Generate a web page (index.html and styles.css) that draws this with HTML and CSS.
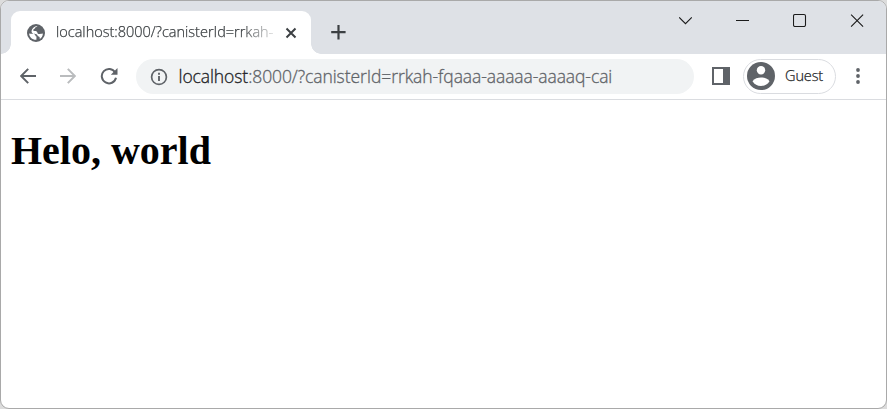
FILE: index.html
```html
<!DOCTYPE html>
<html lang="en">
<head>
<meta charset="utf-8">
<title>localhost:8000</title>
<link rel="stylesheet" href="styles.css">
</head>
<body>
<div class="window">
  <header class="tabstrip">
    <div class="tab">
      <svg class="globe" width="18" height="18" viewBox="0 0 18 18"><circle cx="9" cy="9" r="9" fill="#5f6368"/><path d="M2.1 9.5C4 10 6 9.4 7.600 10.200C8.800 11 8 12.200 9.500 12.400L9.400 15.800C5.300 16 2.300 13.200 2.100 9.500ZM10.600 2.300C9.700 3.200 8.100 3.100 7.700 4.400C7.400 5.300 6 4.900 6.100 6.300C6.300 7.600 8.700 6.700 9.700 7.500C10.700 8.200 10 9.500 11.400 9.900C12.800 10.300 13.900 9.500 15.900 9.400C15.800 11.800 14.700 13.800 12.700 15C13.100 13.500 12.300 12.500 10.900 12.300C10.500 11 10 10.200 8.400 10C7 9.800 5.800 9.800 5 8.800C3.900 7.500 5 5.200 6.200 4C7.400 2.700 8.800 2.100 10.600 2.300Z" fill="#fff"/></svg>
      <span class="tab-title">localhost:8000/?canisterId=rrkah-</span>
      <svg class="tab-close" width="12" height="12" viewBox="0 0 12 12"><path d="M1.500 1.500l9 9m0-9l-9 9" stroke="#3c4043" stroke-width="2"/></svg>
    </div>
    <svg class="new-tab" width="16" height="16" viewBox="0 0 16 16"><path d="M8.500 1v14.400M1.200 8.200h14.400" stroke="#3c4043" stroke-width="2.200"/></svg>
    <div class="controls">
      <svg width="14" height="14" viewBox="0 0 14 14"><path d="M.2 4.300l6.300 6.400 6.300-6.400"/></svg>
      <svg width="14" height="14" viewBox="0 0 14 14"><path d="M0 7.500h13" stroke-width="1"/></svg>
      <svg width="14" height="14" viewBox="0 0 14 14"><rect x=".5" y="1.500" width="12" height="12" rx="1.500"/></svg>
      <svg width="14" height="14" viewBox="0 0 14 14"><path d="M1.100 1.600l12 12m0-12l-12 12"/></svg>
    </div>
  </header>
  <nav class="toolbar">
    <div class="nav-buttons">
      <svg width="16" height="16" viewBox="0 0 16 16"><path d="M16 8H1.500M8.200 .9L1.100 8l7.100 7.100" stroke="#5f6368"/></svg>
      <svg width="16" height="16" viewBox="0 0 16 16"><path d="M0 8h14.500M7.800 .9L14.900 8l-7.100 7.100" stroke="#babcbe"/></svg>
      <svg width="18" height="18" viewBox="0 0 18 18"><path d="M15.200 5.500A7.200 7.200 0 1 0 16 10.800" stroke="#5f6368" stroke-width="2"/><path d="M17.500 1v6.700h-6.700z" fill="#5f6368"/></svg>
    </div>
    <div class="address">
      <svg width="18" height="18" viewBox="0 0 18 18"><circle cx="9" cy="9" r="7.400" fill="none" stroke="#5f6368" stroke-width="1.700"/><path d="M9 8v5M9 4.800v1.900" stroke="#5f6368" stroke-width="1.900"/></svg>
      <span class="url"><span class="host">localhost</span>:8000/?canisterId=rrkah-fqaaa-aaaaa-aaaaq-cai</span>
    </div>
    <svg class="panel" width="18" height="18" viewBox="0 0 18 18"><path d="M0 0h18v18H0zM2 2v14h9V2z" fill="#5f6368" fill-rule="evenodd"/></svg>
    <div class="profile">
      <svg width="28" height="28" viewBox="0 0 28 28"><circle cx="14" cy="14" r="14" fill="#5f6368"/><circle cx="14" cy="8.200" r="4.200" fill="#fff"/><path d="M5.500 19.200C7.200 16.500 11 15.500 14 15.500s6.800 1 8.500 3.700C20.700 22.300 17.600 24 14 24s-6.700-1.700-8.500-4.800z" fill="#fff"/></svg>
      <span>Guest</span>
    </div>
    <svg class="menu" width="4" height="16" viewBox="0 0 4 16" fill="#5f6368"><circle cx="2" cy="2" r="1.900"/><circle cx="2" cy="8" r="1.900"/><circle cx="2" cy="14" r="1.900"/></svg>
  </nav>
  <main class="page"><h1>Helo, world</h1></main>
</div>
</body>
</html>
```
FILE: styles.css
```css
* { box-sizing: border-box; }
body { margin: 0; background: #dcdcdc; font-family: "Open Sans", "Noto Sans", sans-serif; overflow: hidden; }
svg { display: block; flex: none; }
.window { height: 409px; border: 1px solid #a9a9a9; border-radius: 9px; background: #fff; overflow: hidden; display: flex; flex-direction: column; }
.tabstrip { height: 53px; flex: none; background: #dee1e6; display: flex; align-items: flex-start; }
.tab { position: relative; display: flex; align-items: center; width: 300px; height: 43px; margin: 10px 0 0 10px; padding: 0 14px 0 16px; background: #fff; border-radius: 9px 9px 0 0; }
.tab::before, .tab::after { content: ""; position: absolute; bottom: 0; width: 10px; height: 10px; }
.tab::before { left: -10px; background: radial-gradient(circle at 0 0, transparent 9.500px, #fff 10px); }
.tab::after { right: -10px; background: radial-gradient(circle at 100% 0, transparent 9.500px, #fff 10px); }
.tab-title { margin: 0 0 2px 11px; white-space: nowrap; font-size: 14.500px; font-weight: 300; line-height: 20px; color: #3c4043; -webkit-text-stroke: .25px; -webkit-mask-image: linear-gradient(90deg, #000 185px, transparent 224px); mask-image: linear-gradient(90deg, #000 185px, transparent 224px); }
.tab-close { margin-left: auto; }
.new-tab { margin: 23px 0 0 19px; }
.controls { display: flex; gap: 43px; margin: 12px 22px 0 auto; }
.controls svg { fill: none; stroke: #1b1b1b; stroke-width: 1.100; }
.toolbar { height: 46px; flex: none; display: flex; align-items: center; border-bottom: 1px solid #dadce0; }
.nav-buttons { display: flex; align-items: center; gap: 24px; margin-left: 19px; width: 116px; padding-bottom: 1px; fill: none; stroke-width: 2; }
.address { display: flex; align-items: center; width: 558px; height: 35px; padding-left: 14px; border-radius: 18px; background: #f1f3f4; }
.url { margin-left: 10.500px; font-size: 17.500px; font-weight: 300; line-height: 29px; letter-spacing: -.08px; white-space: nowrap; color: #5f6368; -webkit-text-stroke: .3px; }
.host { color: #202124; }
.panel { margin: 0 0 1px 18px; }
.profile { display: flex; align-items: center; width: 93px; height: 35px; margin-left: 13px; padding: 0 0 1px 3px; border: 1px solid #dadce0; border-radius: 18px; font-size: 14.500px; font-weight: 300; letter-spacing: -.1px; -webkit-text-stroke: .25px; color: #202124; }
.profile span { margin: 0 0 1px 10px; }
.menu { margin: 0 0 1px 20px; }
.page { padding-left: 10px; }
h1 { margin: 27px 0 0; font: bold 40px/48px "Liberation Serif", serif; color: #000; }
```
